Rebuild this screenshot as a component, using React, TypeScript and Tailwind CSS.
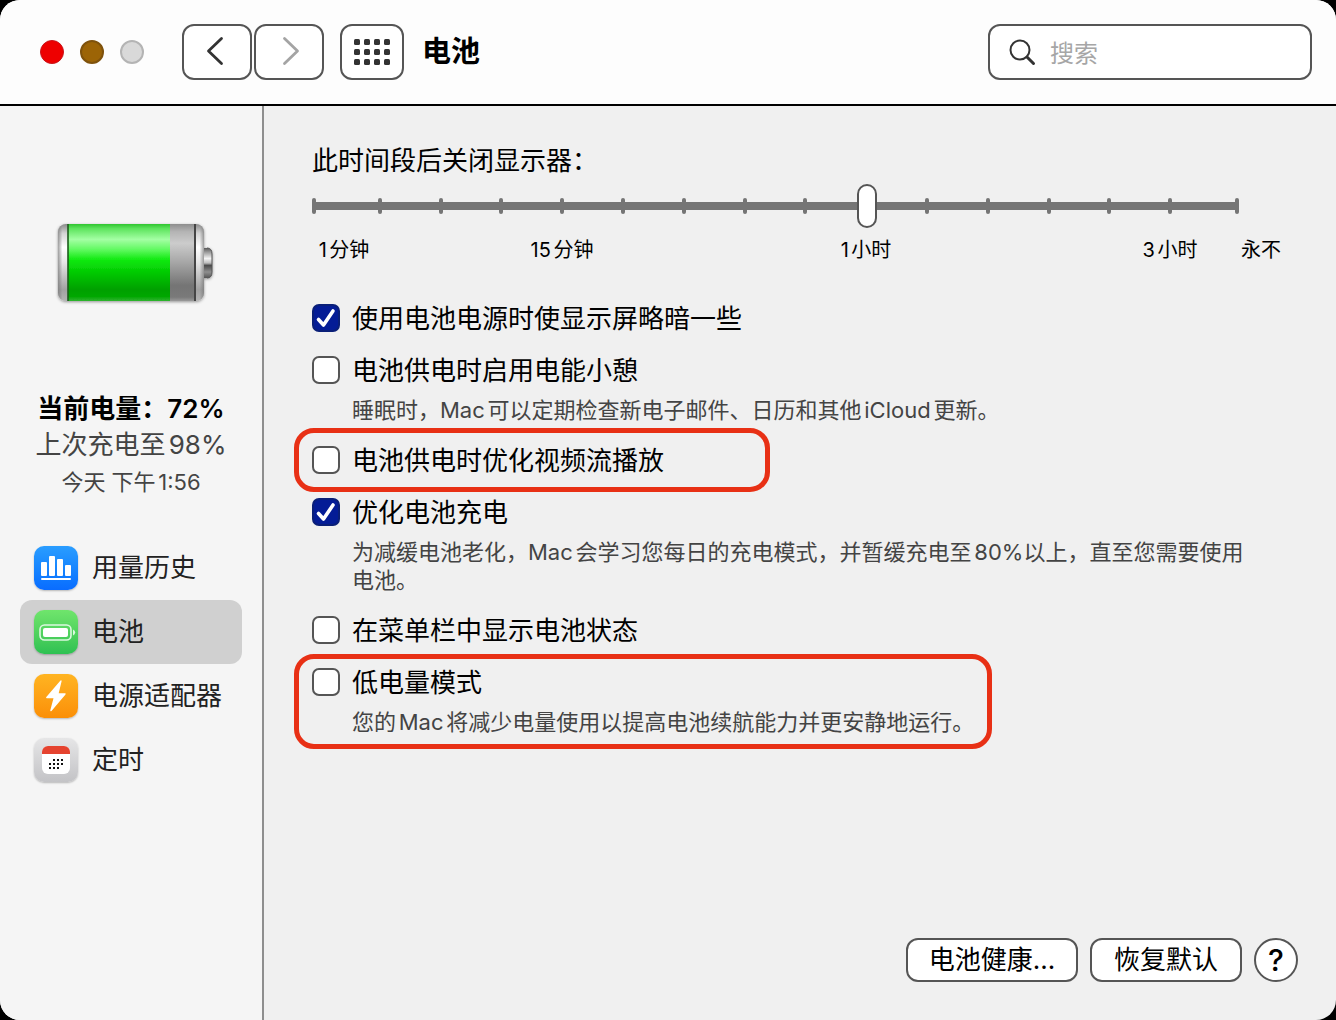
import type { ReactNode } from "react";

const TICK_GAPS = [66, 61, 61, 61, 61, 61, 61, 61, 61, 61, 61, 61, 61, 61, 67];

function BatteryArt() {
  return (
    <svg width="190" height="120" viewBox="0 0 190 120" role="img" aria-label="电池电量">
      <defs>
        <linearGradient id="green" x1="0" y1="0" x2="0" y2="1">
          <stop offset="0" stopColor="#2fc52f" />
          <stop offset="0.06" stopColor="#5ee45e" />
          <stop offset="0.2" stopColor="#a4ffa4" />
          <stop offset="0.34" stopColor="#5cf95c" />
          <stop offset="0.46" stopColor="#12ea12" />
          <stop offset="0.64" stopColor="#00c800" />
          <stop offset="0.85" stopColor="#00a000" />
          <stop offset="0.95" stopColor="#06a806" />
          <stop offset="1" stopColor="#30b430" />
        </linearGradient>
        <linearGradient id="empty" x1="0" y1="0" x2="0" y2="1">
          <stop offset="0" stopColor="#8e8e8e" />
          <stop offset="0.1" stopColor="#b4b4b4" />
          <stop offset="0.25" stopColor="#cccccc" />
          <stop offset="0.5" stopColor="#a6a6a6" />
          <stop offset="0.8" stopColor="#747474" />
          <stop offset="0.95" stopColor="#7a7a7a" />
          <stop offset="1" stopColor="#999999" />
        </linearGradient>
        <linearGradient id="cap" x1="0" y1="0" x2="0" y2="1">
          <stop offset="0" stopColor="#8a8a8a" />
          <stop offset="0.12" stopColor="#d4d4d4" />
          <stop offset="0.3" stopColor="#ffffff" />
          <stop offset="0.5" stopColor="#e6e6e6" />
          <stop offset="0.85" stopColor="#a2a2a2" />
          <stop offset="1" stopColor="#b4b4b4" />
        </linearGradient>
        <linearGradient id="edge" x1="0" y1="0" x2="1" y2="0">
          <stop offset="0" stopColor="#777" stopOpacity="0.7" />
          <stop offset="0.03" stopColor="#777" stopOpacity="0" />
          <stop offset="0.97" stopColor="#777" stopOpacity="0" />
          <stop offset="1" stopColor="#777" stopOpacity="0.7" />
        </linearGradient>
        <linearGradient id="terminal" x1="0" y1="0" x2="0" y2="1">
          <stop offset="0" stopColor="#5a5a5a" />
          <stop offset="0.15" stopColor="#a0a0a0" />
          <stop offset="0.35" stopColor="#f4f4f4" />
          <stop offset="0.5" stopColor="#bdbdbd" />
          <stop offset="0.58" stopColor="#4c4c4c" />
          <stop offset="0.8" stopColor="#8e8e8e" />
          <stop offset="1" stopColor="#555555" />
        </linearGradient>
        <clipPath id="shell">
          <rect x="18" y="24" width="146" height="77" rx="8" />
        </clipPath>
        <filter id="shade" x="-10%" y="-10%" width="120%" height="130%">
          <feDropShadow dx="0" dy="1" stdDeviation="1.5" floodOpacity="0.4" />
        </filter>
      </defs>
      <g filter="url(#shade)">
        <path d="M163 48h4q5 0 5 6v18q0 6-5 6h-4z" fill="url(#terminal)" />
        <path d="M167 48q5 0 5 6v18q0 6-5 6" fill="none" stroke="#555" strokeWidth="1" />
        <g clipPath="url(#shell)">
          <rect x="18" y="24" width="146" height="77" fill="url(#cap)" />
          <rect x="28" y="24" width="102" height="77" fill="url(#green)" />
          <rect x="130" y="24" width="25" height="77" fill="url(#empty)" />
          <rect x="27" y="24" width="2" height="77" fill="#1c5c1c" opacity="0.8" />
          <rect x="154" y="24" width="2" height="77" fill="#444" />
          <rect x="18" y="24" width="146" height="77" fill="url(#edge)" />
        </g>
      </g>
    </svg>
  );
}

function IconTile({ tone, children }: { tone: string; children: ReactNode }) {
  return (
    <span className={`block size-11 shrink-0 rounded-[10px] bg-linear-to-b shadow-[0_1px_2px_rgba(0,0,0,0.25)] ${tone}`}>
      <svg viewBox="0 0 44 44" className="size-11" aria-hidden="true">
        {children}
      </svg>
    </span>
  );
}

const NAV = [
  {
    label: "用量历史",
    icon: (
      <IconTile tone="from-[#2a9dff] to-[#0a6cff]">
        <g fill="#fff">
          <rect x="7" y="16" width="6" height="14" rx="1" />
          <rect x="15" y="10" width="6" height="20" rx="1" />
          <rect x="23" y="13" width="6" height="17" rx="1" />
          <rect x="31" y="19" width="6" height="11" rx="1" />
          <rect x="7" y="32" width="30" height="2" rx="1" />
        </g>
      </IconTile>
    ),
  },
  {
    label: "电池",
    active: true,
    icon: (
      <IconTile tone="from-[#6fe56c] to-[#2dc152]">
        <rect x="6" y="15" width="31" height="15" rx="4.5" fill="none" stroke="#dcf8df" strokeWidth="1.6" />
        <rect x="9" y="18" width="25" height="9" rx="2" fill="#fff" />
        <path d="M39 19.5q2.200 1 2.200 3t-2.200 3z" fill="#dcf8df" />
      </IconTile>
    ),
  },
  {
    label: "电源适配器",
    icon: (
      <IconTile tone="from-[#ffb421] to-[#fb8f06]">
        <path
          d="M26.500 6.500L12.300 23q-.8 1.200.6 1.200h6.600L16.300 36.300q-.1 1.700 1.200.6L31.500 20.500q.8-1.200-.6-1.200h-6.200L27.600 7.200q0-1.600-1.100-.7z"
          fill="#fff"
        />
      </IconTile>
    ),
  },
  {
    label: "定时",
    icon: (
      <IconTile tone="from-[#e6e6e7] to-[#c3c3c6]">
        <rect x="8" y="8" width="28" height="28" rx="6" fill="#fff" />
        <path d="M8 16v-2a6 6 0 0 1 6-6h16a6 6 0 0 1 6 6v2z" fill="#e5432f" />
        <path
          d="M19 22h2M23 22h2M27 22h2M15 26h2M19 26h2M23 26h2M27 26h2M15 30h2M19 30h2M23 30h2"
          stroke="#111"
          strokeWidth="2"
        />
      </IconTile>
    ),
  },
];

function Option({
  id,
  label,
  checked,
  children,
  mark,
}: {
  id: string;
  label: string;
  checked?: boolean;
  children?: ReactNode;
  mark?: string;
}) {
  return (
    <li className="relative">
      <div className="flex items-center gap-3">
        <span className="relative size-7 shrink-0">
          <input
            id={id}
            type="checkbox"
            defaultChecked={checked}
            className="peer block size-7 appearance-none rounded-[7px] border-2 border-[#555] bg-white checked:border-[#0a1f78] checked:bg-[#041c96]"
          />
          <svg
            viewBox="0 0 28 28"
            className="pointer-events-none absolute inset-0 hidden size-7 peer-checked:block"
            aria-hidden="true"
          >
            <path d="M6.500 15.500L11.500 21L21 7" fill="none" stroke="#fff" strokeWidth="3.600" strokeLinecap="round" strokeLinejoin="round" />
          </svg>
        </span>
        <label htmlFor={id} className="pt-0.5 text-[26px] leading-[34px]">
          {label}
        </label>
      </div>
      {children && <p className="mt-2 mb-0.5 pr-8 pl-10 text-[22px] leading-7 text-[#444]">{children}</p>}
      {mark && (
        <span className={`pointer-events-none absolute -left-[18px] rounded-[20px] border-[5px] border-[#e83015] ${mark}`} />
      )}
    </li>
  );
}

export default function App() {
  return (
    <div className="min-h-screen bg-black">
      <div className="flex min-h-screen flex-col overflow-hidden rounded-[20px] bg-[#f0f0f0] font-['Inter','Noto_Sans_CJK_SC',sans-serif] text-black [text-autospace:normal]">
        <header className="flex h-[106px] items-center border-b-2 border-black bg-[#fdfdfd] pr-6 pl-10">
          <div className="flex gap-4">
            <button aria-label="关闭" className="size-6 rounded-full border border-[#c8141a] bg-[#ee0000]" />
            <button aria-label="最小化" className="size-6 rounded-full border-2 border-[#7f520c] bg-[#9c6406]" />
            <button aria-label="缩放" disabled className="size-6 rounded-full border-2 border-[#b4b4b4] bg-[#d9d9d9]" />
          </div>
          <div className="ml-[38px] flex gap-0.5">
            <button aria-label="后退" className="flex h-14 w-[70px] items-center justify-center rounded-xl border-2 border-[#555] bg-white">
              <svg width="30" height="32" viewBox="0 0 30 32" fill="none" stroke="#333" strokeWidth="2.800" strokeLinecap="round" strokeLinejoin="round">
                <path d="M19.500 2.500L6.500 15L19.500 27.500" />
              </svg>
            </button>
            <button aria-label="前进" disabled className="flex h-14 w-[70px] items-center justify-center rounded-xl border-2 border-[#555] bg-white">
              <svg width="30" height="32" viewBox="0 0 30 32" fill="none" stroke="#a4a4a4" strokeWidth="2.800" strokeLinecap="round" strokeLinejoin="round">
                <path d="M10.500 2.500L23.500 15L10.500 27.500" />
              </svg>
            </button>
          </div>
          <button aria-label="显示全部" className="ml-4 flex h-14 w-16 items-center justify-center rounded-xl border-2 border-[#555] bg-white">
            <svg width="36" height="26" viewBox="0 0 36 26" fill="#333">
              {[0, 10, 20].map((y) =>
                [0, 10, 20, 30].map((x) => <rect key={`${x}-${y}`} x={x} y={y} width="6" height="6" rx="1.500" />),
              )}
            </svg>
          </button>
          <h1 className="ml-[18px] text-[29px] leading-10 font-bold">电池</h1>
          <label className="ml-auto flex h-14 w-[324px] items-center rounded-xl border-2 border-[#555] bg-white pl-[18px]">
            <svg width="28" height="28" viewBox="0 0 28 28" fill="none" stroke="#333" strokeLinecap="round" aria-hidden="true">
              <circle cx="12" cy="12" r="9.500" strokeWidth="2" />
              <path d="M19 19L25.500 25.500" strokeWidth="3" />
            </svg>
            <input type="search" aria-label="搜索" placeholder="搜索" className="ml-3.5 min-w-0 flex-1 bg-transparent pt-1 text-2xl outline-none placeholder:text-[#a6a6a6]" />
          </label>
        </header>

        <div className="flex flex-1">
          <aside className="flex w-[264px] shrink-0 flex-col border-r-2 border-[#8e8e8e] bg-[#f5f5f5] px-5 pt-[94px]">
            <div className="pl-5">
              <BatteryArt />
            </div>
            <div className="mt-[71px] text-center whitespace-nowrap text-[#444]">
              <p className="text-[26px] leading-9 font-semibold text-black">当前电量：72%</p>
              <p className="text-[26px] leading-9">上次充电至98%</p>
              <p className="text-[22px] leading-[38px]">今天 下午1:56</p>
            </div>
            <nav className="mt-[35px]">
              {NAV.map((item) => (
                <a
                  key={item.label}
                  href="#"
                  aria-current={item.active ? "page" : undefined}
                  className={`flex h-16 items-center gap-3.5 rounded-xl pl-3.5 text-[26px] leading-9 whitespace-nowrap text-[#222] ${item.active ? "bg-[#d0d0d0]" : ""}`}
                >
                  {item.icon}
                  {item.label}
                </a>
              ))}
            </nav>
          </aside>

          <main className="flex flex-1 flex-col pt-[37px] pr-11 pb-[38px] pl-12">
            <label htmlFor="display-off" className="text-[26px] leading-9">
              此时间段后关闭显示器：
            </label>
            <div className="relative mt-[5px] mr-[53px] flex h-11 items-center">
              <div className="flex h-2 flex-1 items-center bg-[#757575]">
                <span className="h-4 w-1 shrink-0 rounded-sm bg-[#757575]" />
                {TICK_GAPS.map((gap, i) => (
                  <span key={i} className="flex justify-end" style={{ flexGrow: gap, flexBasis: 0 }}>
                    <span className="h-4 w-1 rounded-sm bg-[#757575]" />
                  </span>
                ))}
              </div>
              <input
                id="display-off"
                type="range"
                min="0"
                max="1000"
                defaultValue="601"
                className="absolute inset-0 h-11 w-full appearance-none bg-transparent [&::-webkit-slider-thumb]:h-11 [&::-webkit-slider-thumb]:w-5 [&::-webkit-slider-thumb]:appearance-none [&::-webkit-slider-thumb]:rounded-full [&::-webkit-slider-thumb]:border-2 [&::-webkit-slider-thumb]:border-[#555] [&::-webkit-slider-thumb]:bg-white"
              />
            </div>
            <div className="mt-2 grid grid-cols-[64fr_372fr_236fr_126fr_120fr_62fr] text-center text-xl leading-7 whitespace-nowrap">
              <span>1分钟</span>
              <span>15分钟</span>
              <span>1小时</span>
              <span className="col-start-5">3小时</span>
              <span>永不</span>
            </div>

            <ul className="mt-9 flex flex-col gap-4">
              <Option id="dim" label="使用电池电源时使显示屏略暗一些" checked />
              <Option id="nap" label="电池供电时启用电能小憩">
                睡眠时，Mac可以定期检查新电子邮件、日历和其他iCloud更新。
              </Option>
              <Option id="video" label="电池供电时优化视频流播放" mark="-top-3.5 h-16 w-[476px]" />
              <Option id="charge" label="优化电池充电" checked>
                为减缓电池老化，Mac会学习您每日的充电模式，并暂缓充电至80%以上，直至您需要使用电池。
              </Option>
              <Option id="menubar" label="在菜单栏中显示电池状态" />
              <Option id="lowpower" label="低电量模式" mark="-top-2.5 h-[95px] w-[698px]">
                您的Mac将减少电量使用以提高电池续航能力并更安静地运行。
              </Option>
            </ul>

            <div className="mt-auto -mr-1.5 flex justify-end gap-3">
              <button className="h-11 w-[172px] rounded-xl border-2 border-[#555] bg-white text-[26px] leading-9">电池健康...</button>
              <button className="h-11 w-[152px] rounded-xl border-2 border-[#555] bg-white text-[26px] leading-9">恢复默认</button>
              <button aria-label="帮助" className="size-11 rounded-full border-2 border-[#555] bg-white text-[30px] leading-9 font-medium">
                ?
              </button>
            </div>
          </main>
        </div>
      </div>
    </div>
  );
}
